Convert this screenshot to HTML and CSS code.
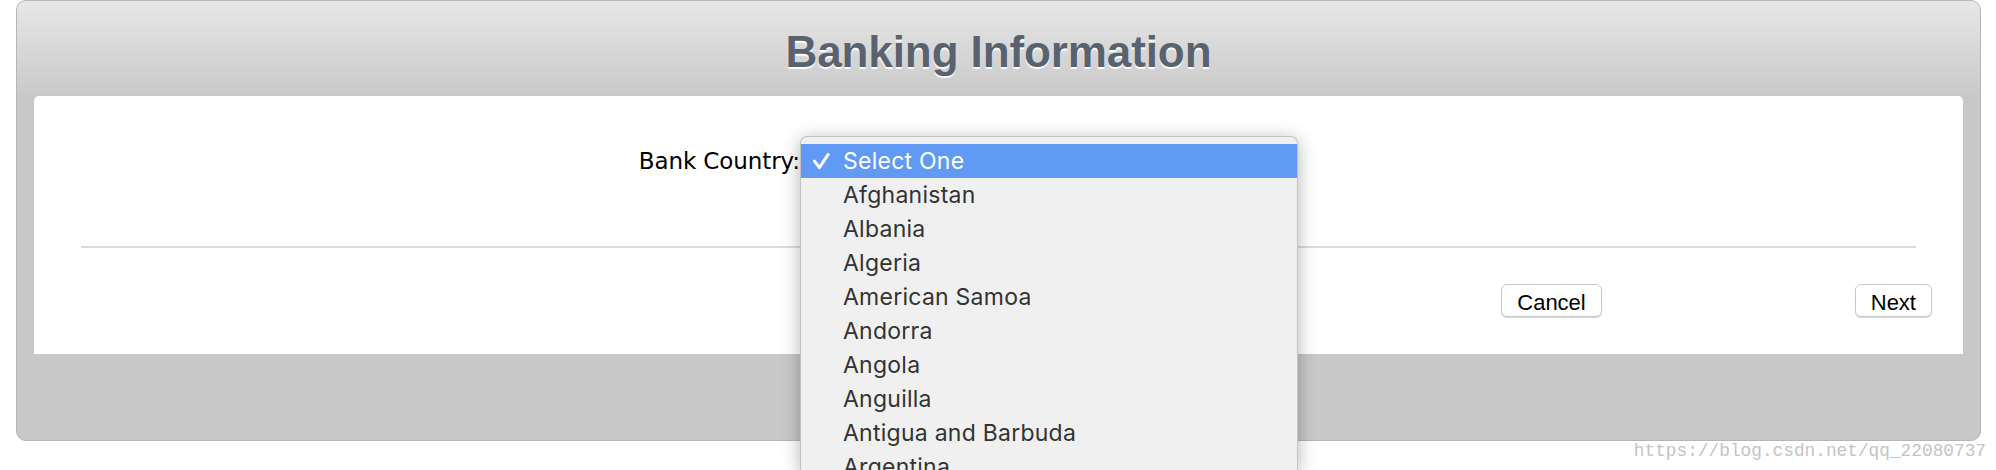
FILE: index.html
```html
<!DOCTYPE html>
<html>
<head>
<meta charset="utf-8">
<title>Banking Information</title>
<link rel="stylesheet" href="styles.css">
</head>
<body>
<div class="panel">
  <div class="panel-header">
    <h1 class="title">Banking Information</h1>
  </div>
  <div class="panel-body">
    <div class="form-row">
      <label class="field-label">Bank Country:</label>
      <div class="select-wrap">
        <ul class="menu">
          <li class="menu-item selected"><svg class="check" width="18" height="18" viewBox="0 0 18 18"><path d="M2.5 9.2 L7.4 15.6 L16.2 2.4" fill="none" stroke="#fff" stroke-width="3" stroke-linecap="round" stroke-linejoin="round"/></svg>Select One</li>
          <li class="menu-item">Afghanistan</li>
          <li class="menu-item">Albania</li>
          <li class="menu-item">Algeria</li>
          <li class="menu-item">American Samoa</li>
          <li class="menu-item">Andorra</li>
          <li class="menu-item">Angola</li>
          <li class="menu-item">Anguilla</li>
          <li class="menu-item">Antigua and Barbuda</li>
          <li class="menu-item">Argentina</li>
        </ul>
      </div>
    </div>
    <hr class="divider">
    <div class="actions">
      <button class="btn">Cancel</button>
      <button class="btn">Next</button>
    </div>
  </div>
</div>
<div class="watermark">https://blog.csdn.net/qq_22080737</div>
</body>
</html>
```
FILE: styles.css
```css
html, body {
  margin: 0;
  padding: 0;
  overflow: hidden;
  background: #ffffff;
}
body {
  width: 1996px;
  height: 470px;
  font-family: "Liberation Sans", Arial, sans-serif;
}
.panel {
  margin-left: 16px;
  width: 1965px;
  height: 441px;
  box-sizing: border-box;
  border: 1px solid #b6b6b6;
  border-radius: 10px;
  background: #c8c8c8;
}
.panel-header {
  height: 95px;
  box-sizing: border-box;
  padding-top: 25px;
  border-radius: 9px 9px 0 0;
  background: linear-gradient(to bottom, #e7e7e7 0%, #c9c9c9 100%);
  text-align: center;
}
.title {
  margin: 0;
  font-family: "Liberation Sans", Arial, sans-serif;
  font-weight: bold;
  font-size: 44px;
  line-height: 52px;
  color: #59636f;
  letter-spacing: -0.1px;
  text-shadow: 0 2px 1px #ffffff;
}
.panel-body {
  margin: 0 17px;
  height: 258px;
  box-sizing: border-box;
  padding-top: 48px;
  background: #ffffff;
  border-radius: 5px 5px 0 0;
}
.form-row {
  display: grid;
  grid-template-columns: 766px 498px;
  height: 34px;
}
.field-label {
  font-family: "DejaVu Sans", "Liberation Sans", sans-serif;
  font-size: 23px;
  line-height: 34px;
  color: #000;
  text-align: right;
  letter-spacing: -0.1px;
}
.select-wrap {
  position: relative;
  height: 34px;
}
.menu {
  position: absolute;
  top: -8px;
  left: 0;
  width: 498px;
  height: 335px;
  box-sizing: border-box;
  overflow: hidden;
  margin: 0;
  padding: 7px 0 0;
  list-style: none;
  background: #f0f0f0;
  border: 1px solid #c2c2c2;
  border-bottom: 0;
  border-radius: 7px 7px 0 0;
  box-shadow: 0 3px 18px rgba(0, 0, 0, 0.3);
  z-index: 5;
}
.menu-item {
  position: relative;
  height: 34px;
  padding-left: 42px;
  font-family: Inter, "Liberation Sans", sans-serif;
  font-size: 23px;
  line-height: 34px;
  color: #333333;
  letter-spacing: 0.25px;
  white-space: nowrap;
}
.menu-item.selected {
  background: #619af5;
  color: #ffffff;
}
.check {
  position: absolute;
  left: 11px;
  top: 8px;
}
.divider {
  margin: 68px 47px 0;
  height: 2px;
  border: 0;
  background: #dcdcdc;
}
.actions {
  display: flex;
  justify-content: flex-end;
  gap: 253px;
  margin-top: 36px;
  padding-right: 31px;
}
.btn {
  height: 33px;
  box-sizing: border-box;
  padding: 3px 15px 0;
  font-family: "Liberation Sans", Arial, sans-serif;
  font-size: 22px;
  line-height: 29px;
  color: #000;
  background: #ffffff;
  border: 1px solid #c9c9c9;
  border-radius: 6px;
  box-shadow: 0 1px 1px rgba(0, 0, 0, 0.18);
}
.watermark {
  padding-right: 10px;
  text-align: right;
  font-family: "Liberation Mono", monospace;
  font-size: 17.8px;
  line-height: 20px;
  color: #c4c4c4;
}
```
